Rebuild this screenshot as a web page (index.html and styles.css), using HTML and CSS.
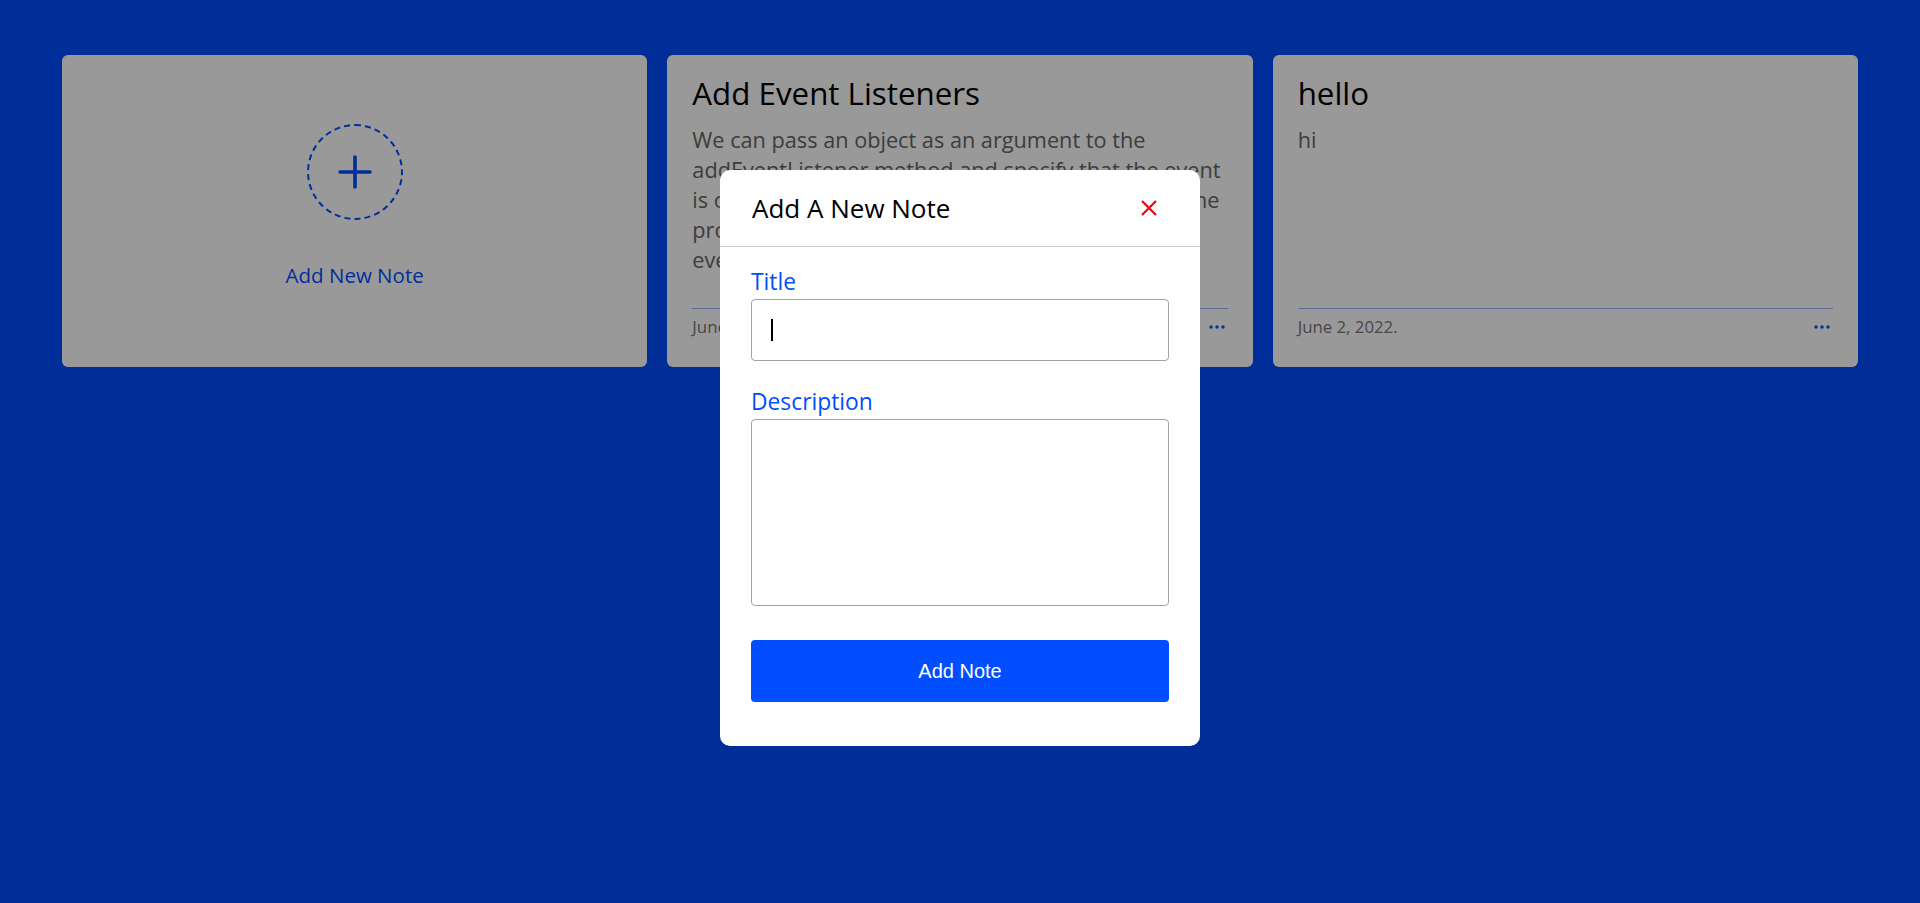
FILE: index.html
```html
<!DOCTYPE html>
<html lang="en">
<head>
<meta charset="utf-8">
<title>Notes</title>
<link rel="stylesheet" href="styles.css">
</head>
<body>
<main class="wrapper">
  <div class="card add-card">
    <div class="add-icon">
      <svg width="34" height="34" viewBox="0 0 34 34"><path d="M17 2V32M2 17H32" stroke="currentColor" stroke-width="3.6" stroke-linecap="round" fill="none"/></svg>
    </div>
    <p class="add-label">Add New Note</p>
  </div>

  <div class="card note">
    <div class="note-body">
      <h2 class="note-title">Add Event Listeners</h2>
      <p class="note-text">We can pass an object as an argument to the addEventListener method and specify that the event is only handled once. This is achieved by passing the property once to the object. If we set it to true, the event will only be fired once.</p>
    </div>
    <div class="note-footer">
      <span class="date">June 2, 2022.</span>
      <svg class="dots" width="16" height="4" viewBox="0 0 16 4"><circle cx="2" cy="2" r="1.7"/><circle cx="8" cy="2" r="1.7"/><circle cx="14" cy="2" r="1.7"/></svg>
    </div>
  </div>

  <div class="card note">
    <div class="note-body">
      <h2 class="note-title">hello</h2>
      <p class="note-text">hi</p>
    </div>
    <div class="note-footer">
      <span class="date">June 2, 2022.</span>
      <svg class="dots" width="16" height="4" viewBox="0 0 16 4"><circle cx="2" cy="2" r="1.7"/><circle cx="8" cy="2" r="1.7"/><circle cx="14" cy="2" r="1.7"/></svg>
    </div>
  </div>
</main>

<div class="overlay">
  <div class="modal">
    <header class="modal-head">
      <h3 class="modal-title">Add A New Note</h3>
      <button class="close" type="button" aria-label="Close">
        <svg width="16" height="16" viewBox="0 0 16 16"><path d="M1 1L15 15M15 1L1 15" stroke="currentColor" stroke-width="2.2" fill="none"/></svg>
      </button>
    </header>
    <form class="modal-body">
      <div class="field">
        <label class="label" for="title">Title</label>
        <div class="input-wrap">
          <input id="title" class="input" type="text">
          <span class="caret"></span>
        </div>
      </div>
      <div class="field">
        <label class="label" for="desc">Description</label>
        <textarea id="desc" class="textarea"></textarea>
      </div>
      <button class="submit" type="button">Add Note</button>
    </form>
  </div>
</div>
</body>
</html>
```
FILE: styles.css
```css
* { box-sizing: border-box; }

body {
  margin: 0;
  min-height: 100vh;
  background: #004eff;
  font-family: "Open Sans", "Noto Sans", sans-serif;
}

.wrapper {
  display: grid;
  grid-template-columns: repeat(3, 1fr);
  gap: 20px;
  padding: 55px 62px;
}

.card {
  height: 312px;
  background: #fff;
  border-radius: 6px;
}

.add-card {
  display: flex;
  flex-direction: column;
  align-items: center;
  justify-content: center;
  padding-bottom: 8px;
  color: #004eff;
}

.add-icon {
  width: 96px;
  height: 96px;
  border: 2px dashed #004eff;
  border-radius: 50%;
  display: flex;
  align-items: center;
  justify-content: center;
}

.add-label {
  margin: 40px 0 0;
  font-size: 20.5px;
  line-height: 30px;
  font-weight: 500;
}

.note {
  display: flex;
  flex-direction: column;
  padding: 18px 25px 28px;
}

.note-body {
  flex: 1;
  overflow: hidden;
}

.note-title {
  margin: 0;
  font-size: 31.3px;
  line-height: 40px;
  font-weight: 500;
  color: #000;
}

.note-text {
  margin: 12px 0 0;
  font-size: 21.7px;
  line-height: 30px;
  color: #666;
}

.note-footer {
  display: flex;
  align-items: center;
  justify-content: space-between;
  border-top: 1px solid #9ab4f0;
  padding-top: 6px;
}

.date {
  font-size: 16.8px;
  line-height: 24px;
  color: #777;
}

.dots {
  fill: #0055ff;
  margin-right: 3px;
}

.overlay {
  position: fixed;
  inset: 0;
  background: rgba(0, 0, 0, 0.4);
  display: flex;
  justify-content: center;
  align-items: flex-start;
  padding-top: 170px;
}

.modal {
  width: 480px;
  background: #fff;
  border-radius: 10px;
}

.modal-head {
  height: 77px;
  display: flex;
  align-items: center;
  justify-content: space-between;
  padding: 0 32px;
  border-bottom: 1px solid #cfcfcf;
}

.modal-title {
  margin: 0;
  font-size: 26px;
  font-weight: 500;
  color: #000;
}

.close {
  display: flex;
  padding: 0;
  margin-right: 11px;
  border: none;
  background: none;
  color: #f00010;
}

.modal-body {
  padding: 20px 31px 44px;
}

.field {
  margin-bottom: 26px;
}

.label {
  display: block;
  font-size: 22.8px;
  line-height: 30px;
  color: #004eff;
}

.input-wrap {
  position: relative;
  margin-top: 2px;
}

.input {
  display: block;
  width: 100%;
  height: 62px;
  padding: 0 20px;
  border: 1px solid #a3a3a3;
  border-radius: 4px;
  font-size: 20px;
  font-family: inherit;
  outline: none;
}

.caret {
  position: absolute;
  left: 20px;
  top: 20px;
  width: 2px;
  height: 22px;
  background: #000;
}

.textarea {
  display: block;
  width: 100%;
  height: 187px;
  margin-top: 2px;
  border: 1px solid #a3a3a3;
  border-radius: 4px;
  resize: none;
  font-family: inherit;
  font-size: 18px;
  padding: 10px 20px;
  outline: none;
}

.submit {
  display: block;
  width: 100%;
  height: 62px;
  margin-top: 34px;
  border: none;
  border-radius: 4px;
  background: #004eff;
  color: #fff;
  font-family: "Liberation Sans", Arial, sans-serif;
  font-size: 20px;
}
```
